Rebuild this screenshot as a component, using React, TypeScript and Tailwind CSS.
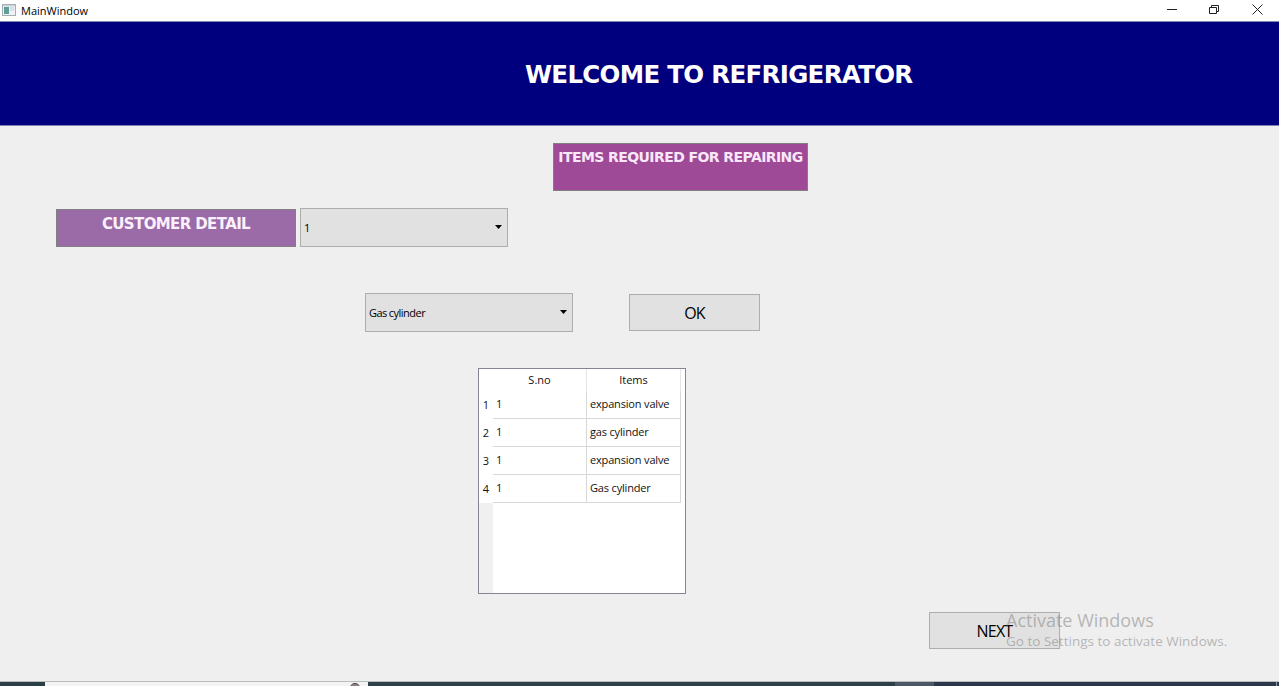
import type { ReactNode } from 'react';

const rows = [
  ['1', 'expansion valve'],
  ['1', 'gas cylinder'],
  ['1', 'expansion valve'],
  ['1', 'Gas cylinder'],
];

function TitleBar() {
  return (
    <header className="flex h-[21px] shrink-0 items-start bg-white pl-[2px]">
      <svg className="mt-[4px]" width="14" height="12" viewBox="0 0 14 12">
        <rect x="0.5" y="0.5" width="13" height="11" fill="#eef2f5" stroke="#a6aeb5" />
        <rect x="1" y="1" width="12" height="1.5" fill="#c9d3dc" />
        <rect x="2" y="3" width="5" height="7" fill="#5f9f9a" />
        <rect x="8" y="3" width="4" height="4" fill="#d6e0e8" />
      </svg>
      <span className="ml-[5px] mt-[3px] text-[11px] leading-[16px] text-black">MainWindow</span>
      <div className="ml-auto mr-[16px] mt-[4px] flex items-center">
        <svg width="10" height="11" viewBox="0 0 10 11" stroke="#222" fill="none">
          <path d="M0 5.5H10" />
        </svg>
        <svg className="ml-[32px]" width="11" height="11" viewBox="0 0 11 11" stroke="#222" fill="none">
          <path d="M0.5 3.5H7.5V9.5H0.5ZM2.5 3.5V1.5H9.5V7.5H7.5" />
        </svg>
        <svg className="ml-[32px]" width="11" height="11" viewBox="0 0 11 11" stroke="#222" fill="none">
          <path d="M0.5 0.5L10.5 10.5M10.5 0.5L0.5 10.5" />
        </svg>
      </div>
    </header>
  );
}

function ComboBox({ children }: { children: ReactNode }) {
  return (
    <div className="flex h-[39px] w-[208px] items-center justify-between border border-[#adadad] bg-[#e1e1e1] pl-[3px] pr-[5px] text-[11px] tracking-[-0.5px] [word-spacing:-0.5px] text-black">
      <span className="pt-px">{children}</span>
      <svg className="-mt-[2px]" width="7" height="4" viewBox="0 0 7 4">
        <path d="M0 0H7L3.5 4Z" fill="#000" />
      </svg>
    </div>
  );
}

function PushButton({ children }: { children: ReactNode }) {
  return (
    <button className="flex h-[37px] w-[131px] items-center justify-center border border-[#adadad] bg-[#e1e1e1] text-[16px] tracking-[-0.8px] text-black">
      {children}
    </button>
  );
}

function ItemsTable() {
  return (
    <div className="flex h-[226px] w-[208px] flex-col border border-[#828790] bg-white text-[11px] text-[#111]">
      <div className="flex h-[22px]">
        <div className="w-[14px]" />
        <div className="flex w-[94px] items-center justify-center border-r border-[#e5e5e5]">S.no</div>
        <div className="flex w-[94px] items-center justify-center border-r border-[#e5e5e5]">Items</div>
      </div>
      {rows.map(([no, item], i) => (
        <div key={i} className="flex h-[28px]">
          <div className="flex w-[14px] items-center justify-center pt-px">{i + 1}</div>
          <div className="flex w-[94px] items-center border-r border-b border-[#d8d8d8] pl-[3px]">{no}</div>
          <div className="flex w-[94px] items-center border-r border-b border-[#d8d8d8] pl-[3px] tracking-[-0.17px]">{item}</div>
        </div>
      ))}
      <div className="w-[14px] grow bg-[#f0f0f0]" />
    </div>
  );
}

export default function App() {
  return (
    <div className="relative flex h-[686px] w-[1279px] flex-col overflow-hidden bg-[#efefef] font-['Open_Sans','Noto_Sans',sans-serif]">
      <TitleBar />
      <div className="h-[105px] shrink-0 border-b border-t border-b-[#7f7fb8] border-t-[#7c8bb0] bg-[#00007e] pl-[525px] pt-[35px]">
        <h1 className="whitespace-nowrap font-['DejaVu_Sans',sans-serif] text-[24.5px] font-bold leading-[36px] tracking-[-0.69px] text-white">
          WELCOME TO REFRIGERATOR
        </h1>
      </div>
      <main className="flex grow flex-col items-start">
        <div className="ml-[553px] mt-[17px] flex h-[48px] w-[255px] justify-center whitespace-nowrap border border-[#808080] bg-[#9f4a96] pt-[3px] font-['DejaVu_Sans',sans-serif] text-[14px] font-bold leading-[20px] tracking-[-0.58px] text-[#f8e8fa]">
          ITEMS REQUIRED FOR REPAIRING
        </div>
        <div className="ml-[56px] mt-[18px] flex gap-[4px]">
          <div className="flex h-[38px] w-[240px] justify-center whitespace-nowrap border border-[#808080] bg-[#9a6ba6] pt-[4px] font-['DejaVu_Sans',sans-serif] text-[15px] font-bold leading-[21px] tracking-[-0.62px] text-[#fbf0fd]">
            CUSTOMER DETAIL
          </div>
          <div className="-mt-px">
            <ComboBox>1</ComboBox>
          </div>
        </div>
        <div className="ml-[365px] mt-[46px] flex items-center gap-[56px]">
          <ComboBox>Gas cylinder</ComboBox>
          <PushButton>OK</PushButton>
        </div>
        <div className="ml-[478px] mt-[36px]">
          <ItemsTable />
        </div>
        <div className="ml-[929px] mt-[18px]">
          <PushButton>NEXT</PushButton>
        </div>
      </main>
      <footer className="flex h-[5px] shrink-0 border-t border-[#b8bdc0] bg-[#2d3a4a]">
        <div className="w-[45px] bg-[#2b3e46]" />
        <div className="flex w-[323px] justify-end bg-[#f3f3f3] pr-[8px]">
          <svg width="10" height="4" viewBox="0 0 10 4">
            <path d="M0.5 4Q5 -1.5 9.5 4" fill="#8a8080" stroke="#554c4c" />
          </svg>
        </div>
        <div className="w-[527px] bg-[#2d3f49]" />
        <div className="w-[39px] bg-[#4d5867]" />
        <div className="grow bg-[#2b374a]" />
        <div className="mr-[2px] w-px bg-[#8f98a3]" />
      </footer>
      <div className="pointer-events-none absolute left-[1006px] top-[608px] whitespace-nowrap text-[#838383]/55">
        <div className="text-[18px] leading-[24px]">Activate Windows</div>
        <div className="text-[13.5px] leading-[18px]">Go to Settings to activate Windows.</div>
      </div>
    </div>
  );
}
